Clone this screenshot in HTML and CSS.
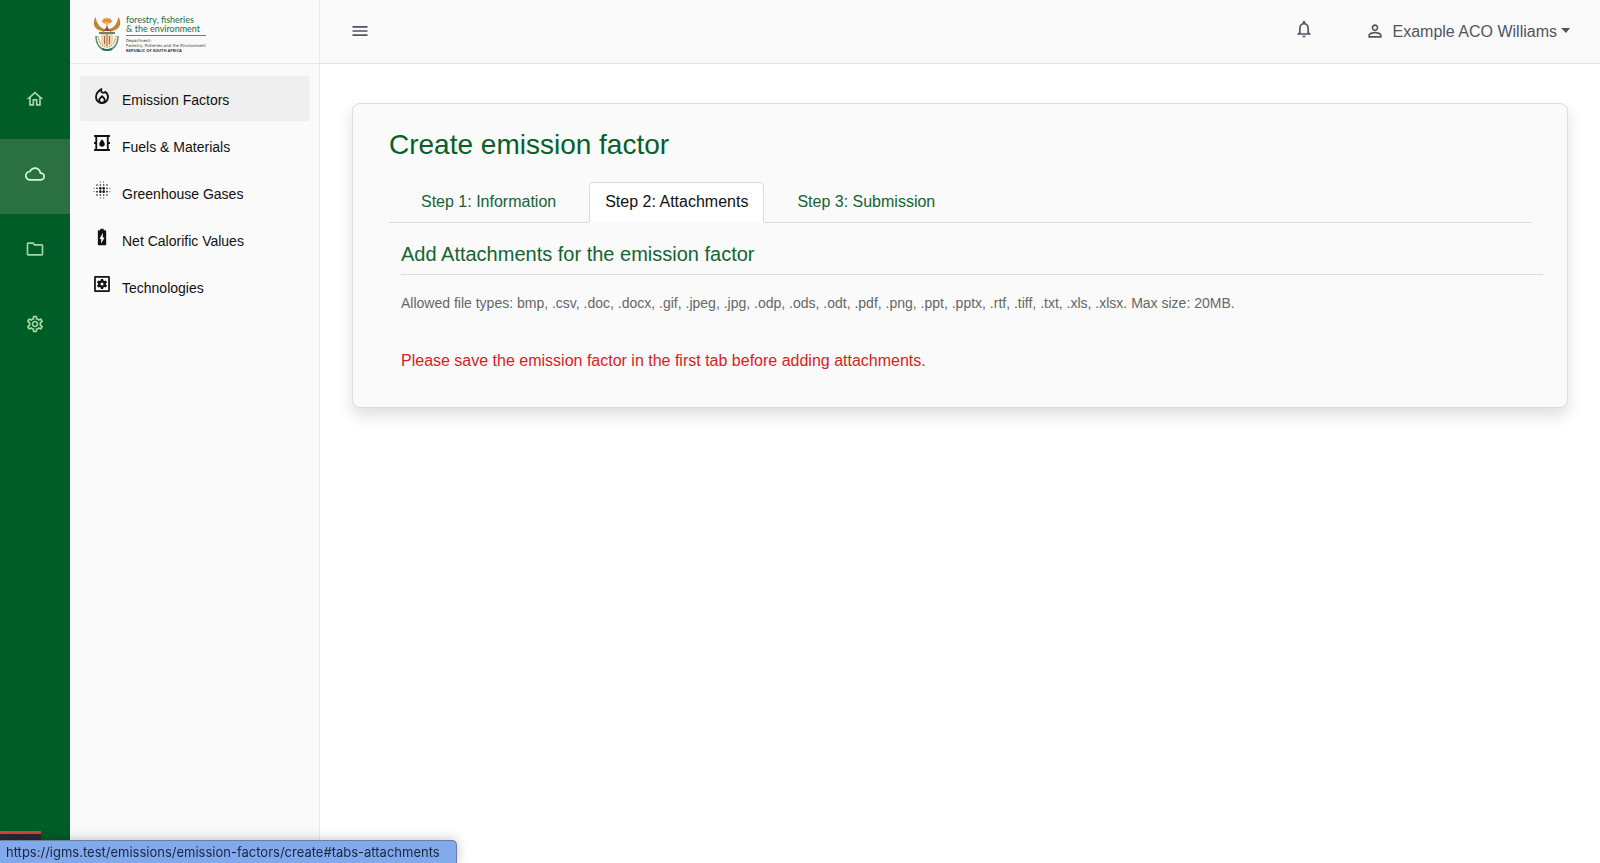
FILE: index.html
```html
<!DOCTYPE html>
<html lang="en">
<head>
<meta charset="utf-8">
<meta name="viewport" content="width=device-width, initial-scale=1">
<title>Create emission factor</title>
<link rel="stylesheet" href="styles.css">
</head>
<body>
<svg class="defs" aria-hidden="true">
  <symbol id="home" viewBox="0 0 24 24"><path d="M12 5.690l5 4.500V18h-2v-6H9v6H7v-7.810l5-4.500M12 3L2 12h3v8h6v-6h2v6h6v-8h3L12 3z"/></symbol>
  <symbol id="cloud" viewBox="0 0 24 24"><path d="M19.350 10.040C18.670 6.590 15.640 4 12 4 9.110 4 6.600 5.640 5.350 8.040 2.340 8.360 0 10.910 0 14c0 3.310 2.690 6 6 6h13c2.760 0 5-2.240 5-5 0-2.640-2.050-4.780-4.650-4.960zM19 18H6c-2.210 0-4-1.790-4-4 0-2.050 1.530-3.760 3.560-3.970l1.070-.11.5-.95C8.080 7.140 9.940 6 12 6c2.620 0 4.880 1.860 5.390 4.430l.3 1.500 1.530.11c1.560.1 2.780 1.410 2.780 2.960 0 1.650-1.350 3-3 3z"/></symbol>
  <symbol id="folder" viewBox="0 0 24 24"><path d="M9.170 6l2 2H20v10H4V6h5.170M10 4H4c-1.100 0-2 .9-2 2v12c0 1.100.9 2 2 2h16c1.100 0 2-.9 2-2V8c0-1.100-.9-2-2-2h-8l-2-2z"/></symbol>
  <symbol id="gear" viewBox="0 0 24 24"><path d="M19.430 12.980c.04-.32.07-.64.07-.98 0-.34-.03-.66-.07-.98l2.110-1.650c.19-.15.24-.42.12-.64l-2-3.460c-.09-.16-.26-.25-.44-.25-.06 0-.12.01-.17.03l-2.490 1c-.52-.4-1.080-.73-1.690-.98l-.38-2.650C14.460 2.180 14.250 2 14 2h-4c-.25 0-.46.18-.49.42l-.38 2.650c-.61.25-1.170.59-1.690.98l-2.490-1c-.06-.02-.12-.03-.18-.03-.17 0-.34.09-.43.25l-2 3.460c-.13.22-.07.49.12.64l2.110 1.650c-.04.32-.07.65-.07.98 0 .33.03.66.07.98l-2.110 1.650c-.19.15-.24.42-.12.64l2 3.460c.09.16.26.25.44.25.06 0 .12-.01.17-.03l2.490-1c.52.4 1.080.73 1.690.98l.38 2.650c.03.24.24.42.49.42h4c.25 0 .46-.18.49-.42l.38-2.650c.61-.25 1.170-.59 1.690-.98l2.490 1c.06.02.12.03.18.03.17 0 .34-.09.43-.25l2-3.460c.12-.22.07-.49-.12-.64l-2.110-1.650zm-1.980-1.710c.04.31.05.52.05.73 0 .21-.02.43-.05.73l-.14 1.130.89.7 1.080.84-.7 1.210-1.270-.51-1.040-.42-.9.68c-.43.32-.84.56-1.250.73l-1.060.43-.16 1.130-.2 1.350h-1.400l-.19-1.350-.16-1.130-1.060-.43c-.43-.18-.83-.41-1.230-.71l-.91-.7-1.060.43-1.270.51-.7-1.210 1.080-.84.89-.7-.14-1.130c-.03-.31-.05-.54-.05-.74s.02-.43.05-.73l.14-1.130-.89-.7-1.080-.84.7-1.210 1.270.51 1.040.42.9-.68c.43-.32.84-.56 1.250-.73l1.060-.43.16-1.130.2-1.350h1.390l.19 1.350.16 1.130 1.060.43c.43.18.83.41 1.230.71l.91.7 1.060-.43 1.270-.51.7 1.210-1.070.85-.89.7.14 1.130zM12 8c-2.210 0-4 1.790-4 4s1.790 4 4 4 4-1.790 4-4-1.790-4-4-4zm0 6c-1.100 0-2-.9-2-2s.9-2 2-2 2 .9 2 2-.9 2-2 2z"/></symbol>
  <symbol id="fire" viewBox="0 0 24 24"><g fill="none" stroke="currentColor" stroke-width="2.200"><path d="M11 4v1.500c0 2.700 3 3.500 5 1.600 2 1.300 3.200 3.500 3.200 6 0 4.200-3.200 7.400-7.200 7.400s-7.200-3.200-7.200-7.400C4.800 9.300 7.500 6 11 4z"/><path d="M12 12.400l-2.300 2.200c-.7.700-1 1.400-1 2.200 0 2 1.500 3.500 3.300 3.500s3.300-1.500 3.300-3.500c0-.8-.3-1.500-1-2.200z"/></g></symbol>
  <symbol id="barrel" viewBox="0 0 24 24"><path d="M2.500 2.500h19v2.200H20v6.200h1.500v2.200H20v6.200h1.500v2.200h-19v-2.200H4v-6.200H2.500v-2.200H4V4.700H2.500zM6.200 4.700v14.600h11.600V4.700z"/><path d="M12 7.500s-3.300 3.500-3.300 5.700a3.300 3.300 0 0 0 6.600 0C15.300 11 12 7.500 12 7.500z"/></symbol>
  <symbol id="blur" viewBox="0 0 24 24"><g fill="none" stroke="currentColor" stroke-linecap="round"><path stroke-width="3.200" d="M10 10h0M14 10h0M10 14h0M14 14h0"/><path stroke-width="2" d="M6 6h0M10 6h0M14 6h0M18 6h0M6 10h0M18 10h0M6 14h0M18 14h0M6 18h0M10 18h0M14 18h0M18 18h0"/><path stroke-width="1.100" d="M10 2.500h0M14 2.500h0M10 21.500h0M14 21.500h0M2.500 10h0M2.500 14h0M21.500 10h0M21.500 14h0"/></g></symbol>
  <symbol id="battery" viewBox="0 0 24 24"><path d="M15.670 4H14V2h-4v2H8.330C7.600 4 7 4.600 7 5.330v15.330C7 21.400 7.600 22 8.330 22h7.330c.74 0 1.340-.6 1.340-1.330V5.330C17 4.600 16.400 4 15.670 4zM11 20v-5.500H9L13 7v5.500h2L11 20z"/></symbol>
  <symbol id="apps" viewBox="0 0 24 24"><path fill-rule="evenodd" d="M4 2.500h16A1.500 1.500 0 0 1 21.500 4v16a1.500 1.500 0 0 1-1.500 1.500H4A1.500 1.500 0 0 1 2.500 20V4A1.500 1.500 0 0 1 4 2.500zM4.600 4.600v14.800h14.800V4.600z"/><path fill-rule="evenodd" d="M10.700 6h2.600l.4 1.800 1.200.7 1.800-.6 1.300 2.300-1.400 1.200v1.200l1.400 1.200-1.300 2.300-1.800-.6-1.200.7-.4 1.800h-2.600l-.4-1.800-1.200-.7-1.800.6L6 13.800l1.400-1.200v-1.200L6 10.200l1.300-2.300 1.800.6 1.200-.7zM12 10.200a1.800 1.800 0 1 0 0 3.600 1.800 1.800 0 0 0 0-3.600z"/></symbol>
  <symbol id="bell" viewBox="0 0 24 24"><path d="M12 22c1.100 0 2-.9 2-2h-4c0 1.100.9 2 2 2zm6-6v-5c0-3.070-1.630-5.640-4.500-6.320V4c0-.83-.67-1.500-1.500-1.500s-1.500.67-1.500 1.500v.68C7.640 5.360 6 7.920 6 11v5l-2 2v1h16v-1l-2-2zm-2 1H8v-6c0-2.480 1.510-4.500 4-4.500s4 2.020 4 4.500v6z"/></symbol>
  <symbol id="person" viewBox="0 0 24 24"><path d="M12 5.900a2.100 2.100 0 1 1 0 4.200 2.100 2.100 0 0 1 0-4.200m0 9c2.970 0 6.100 1.460 6.100 2.100v1.100H5.900V17c0-.64 3.130-2.100 6.100-2.100M12 4C9.790 4 8 5.790 8 8s1.790 4 4 4 4-1.790 4-4-1.790-4-4-4zm0 9c-2.670 0-8 1.340-8 4v3h16v-3c0-2.660-5.330-4-8-4z"/></symbol>
  <symbol id="menu" viewBox="0 0 24 24"><path d="M3 18h18v-2H3v2zm0-5h18v-2H3v2zm0-7v2h18V6H3z"/></symbol>
</svg>
<div class="app">
  <nav class="rail" aria-label="Main">
    <a class="rail-link" href="#home" aria-label="Home"><svg class="icon"><use href="#home"/></svg></a>
    <a class="rail-link active" href="#emissions" aria-label="Emissions"><svg class="icon"><use href="#cloud"/></svg></a>
    <a class="rail-link" href="#files" aria-label="Files"><svg class="icon"><use href="#folder"/></svg></a>
    <a class="rail-link" href="#settings" aria-label="Settings"><svg class="icon"><use href="#gear"/></svg></a>
    <div class="debug"><svg class="icon" viewBox="0 0 24 24" aria-hidden="true"><path d="M12 3l8 5v8l-8 5-8-5V8z" fill="none" stroke="currentColor" stroke-width="2"/></svg></div>
  </nav>
  <aside class="sidebar">
    <a class="brand" href="#home">
      <svg class="emblem" viewBox="0 0 28 36" aria-hidden="true">
        <path d="M3 20c0 8 4 14 11 14s11-6 11-14" fill="none" stroke="#5b8f72" stroke-width="1.500"/>
        <path d="M5 20c1 7 4 11 9 11s8-4 9-11" fill="none" stroke="#c89a55" stroke-width="1.500" stroke-dasharray="1.500 1"/>
        <path d="M2.500 1C-1 7 1 13 7 14.500l4 1.500 1-3C7 12 4 8 2.500 1zM25.500 1C29 7 27 13 21 14.500L17 16l-1-3c5-1 8-5 9.500-12z" fill="#bf8530"/>
        <path d="M8.500 5l1.500-1 1-2 2 1 1-2 1 2 2-1 1 2 1.500 1-2 2h-7z" fill="#f08b2d"/>
        <path d="M10 7q4-2 8 0l-4 2z" fill="#f3bd52"/>
        <path d="M14 8l1 4 3 3h-8l3-3z" fill="#9b4b31"/>
        <path d="M6 16h16v2H6z" fill="#6b8068"/>
        <path d="M8 18h12v7q-1 5-6 6-5-1-6-6z" fill="#ecd6ae"/>
        <path d="M11.500 20v8M14 18v12M16.500 20v8" stroke="#a8683c" stroke-width="1"/>
        <path d="M9 33q5 2 10 0" fill="none" stroke="#23754a" stroke-width="2"/>
      </svg>
      <span class="brand-text">
        <span class="brand-name">forestry, fisheries<br>&amp; the environment</span>
        <span class="brand-dept">Department:<br>Forestry, Fisheries and the Environment<br><b>REPUBLIC OF SOUTH AFRICA</b></span>
      </span>
    </a>
    <nav class="menu" aria-label="Emissions">
      <a class="menu-link active" href="#factors"><svg class="icon"><use href="#fire"/></svg><span>Emission Factors</span></a>
      <a class="menu-link" href="#fuels"><svg class="icon"><use href="#barrel"/></svg><span>Fuels &amp; Materials</span></a>
      <a class="menu-link" href="#gases"><svg class="icon"><use href="#blur"/></svg><span>Greenhouse Gases</span></a>
      <a class="menu-link" href="#calorific"><svg class="icon"><use href="#battery"/></svg><span>Net Calorific Values</span></a>
      <a class="menu-link" href="#technologies"><svg class="icon"><use href="#apps"/></svg><span>Technologies</span></a>
    </nav>
  </aside>
  <div class="page">
    <header class="topbar">
      <button class="plain" type="button" aria-label="Toggle menu"><svg class="icon"><use href="#menu"/></svg></button>
      <div class="account">
        <button class="plain bell" type="button" aria-label="Notifications"><svg class="icon"><use href="#bell"/></svg></button>
        <button class="plain user" type="button"><svg class="icon"><use href="#person"/></svg><span>Example ACO Williams</span><i class="caret"></i></button>
      </div>
    </header>
    <main class="content">
      <section class="card">
        <h1>Create emission factor</h1>
        <nav class="tabs" aria-label="Steps">
          <a class="tab" href="#tabs-information">Step 1: Information</a>
          <a class="tab active" href="#tabs-attachments">Step 2: Attachments</a>
          <a class="tab" href="#tabs-submission">Step 3: Submission</a>
        </nav>
        <div class="panel">
          <h2>Add Attachments for the emission factor</h2>
          <p class="hint">Allowed file types: bmp, .csv, .doc, .docx, .gif, .jpeg, .jpg, .odp, .ods, .odt, .pdf, .png, .ppt, .pptx, .rtf, .tiff, .txt, .xls, .xlsx. Max size: 20MB.</p>
          <p class="warning">Please save the emission factor in the first tab before adding attachments.</p>
        </div>
      </section>
    </main>
  </div>
</div>
<div class="status">https://igms.test/emissions/emission-factors/create#tabs-attachments</div>
</body>
</html>
```
FILE: styles.css
```css
* { box-sizing: border-box; }
body { margin: 0; font-family: "Liberation Sans", Arial, sans-serif; font-size: 16px; line-height: 24px; color: #111; background: #fff; }
a { color: inherit; text-decoration: none; }
h1, h2, p { margin: 0; font-weight: 400; }
.defs { display: none; }
.icon { display: block; flex: none; width: 20px; height: 20px; fill: currentColor; }
.app { display: flex; min-height: 100vh; }

.rail { display: flex; flex-direction: column; flex: none; width: 70px; padding-top: 63px; background: #005d28; color: #a5d8a0; }
.rail-link { display: flex; align-items: center; justify-content: center; height: 76px; padding-bottom: 5px; }
.rail-link.active { background: #2a7040; color: #d0ffd0; }
.rail-link + .rail-link { height: 75px; }
.debug { display: flex; justify-content: center; width: 41px; height: 32px; margin-top: auto; padding-top: 4px; border-top: 3px solid #d3452f; background: #252a37; color: #b83a32; }

.sidebar { flex: none; width: 250px; background: #fafafa; border-right: 1px solid #e8e8e8; }
.brand { display: flex; align-items: center; gap: 5px; height: 64px; padding: 4px 0 0 23px; border-bottom: 1px solid #e8e8e8; }
.emblem { width: 28px; height: 36px; }
.brand-text { display: block; }
.brand-name { display: block; font-family: Lato, sans-serif; font-size: 9px; line-height: 9px; color: #256b46; padding-bottom: 2px; border-bottom: 1px solid #777; }
.brand-dept { display: block; padding-top: 2px; font-family: "DejaVu Sans", sans-serif; font-size: 4px; line-height: 5px; color: #333; }
.brand-dept b { font-family: "Open Sans", sans-serif; }
.menu { display: flex; flex-direction: column; gap: 2px; padding: 12px 10px; }
.menu-link { display: flex; gap: 10px; height: 45px; padding: 10px 12px; font-size: 14px; line-height: 29px; border-radius: 2px; }
.menu-link.active { background: #efefef; }

.page { flex: 1; min-width: 0; }
.topbar { display: flex; align-items: center; justify-content: space-between; height: 64px; padding: 0 30px 2px; background: #fafafa; border-bottom: 1px solid #e2e2e2; color: #505463; }
.plain { display: flex; align-items: center; margin: 0; padding: 0; border: 0; background: none; font: inherit; color: inherit; cursor: pointer; }
.account { display: flex; align-items: center; gap: 51px; }
.bell { padding-bottom: 4px; }
.user { gap: 8px; }
.user span { padding-top: 2px; }
.caret { margin-left: -4px; border: 4px solid transparent; border-top: 5px solid; border-bottom: 0; border-left-width: 5px; }

.content { padding: 39px 32px 32px; }
.card { padding: 24px 35px 34px 36px; border: 1px solid #dcdcdc; border-radius: 8px; background: #fafafa; box-shadow: 0 8px 16px rgba(0, 0, 0, .13); }
h1 { font-size: 28px; line-height: 34px; color: #075f29; }
.tabs { display: flex; margin-top: 20px; padding: 0 15px; border-bottom: 1px solid #dcdcdc; }
.tab { margin-bottom: -1px; padding: 7px 16px 8px; border: 1px solid transparent; border-radius: 5px 5px 0 0; color: #146332; }
.tab.active { margin: 0 16px -1px; padding: 7px 15px 8px; background: #fff; border-color: #dcdcdc; border-bottom-color: #fff; color: #111; }
.panel { margin: 19px -11px 0 12px; }
h2 { padding-bottom: 8px; border-bottom: 1px solid #dcdcdc; font-size: 20px; line-height: 24px; color: #146332; }
.hint { margin-top: 16px; font-size: 14px; color: #666; }
.warning { margin-top: 34px; color: #d9211f; }

.status { position: fixed; left: 0; bottom: 0; padding: 0 16px 0 6px; border: 1px solid #6d7f9c; border-left: 0; border-bottom: 0; border-radius: 0 5px 0 0; background: #82a9ec; box-shadow: 0 0 12px rgba(0, 0, 0, .25); font-family: Inter, sans-serif; font-size: 13px; line-height: 22px; color: #1b2638; }
```
